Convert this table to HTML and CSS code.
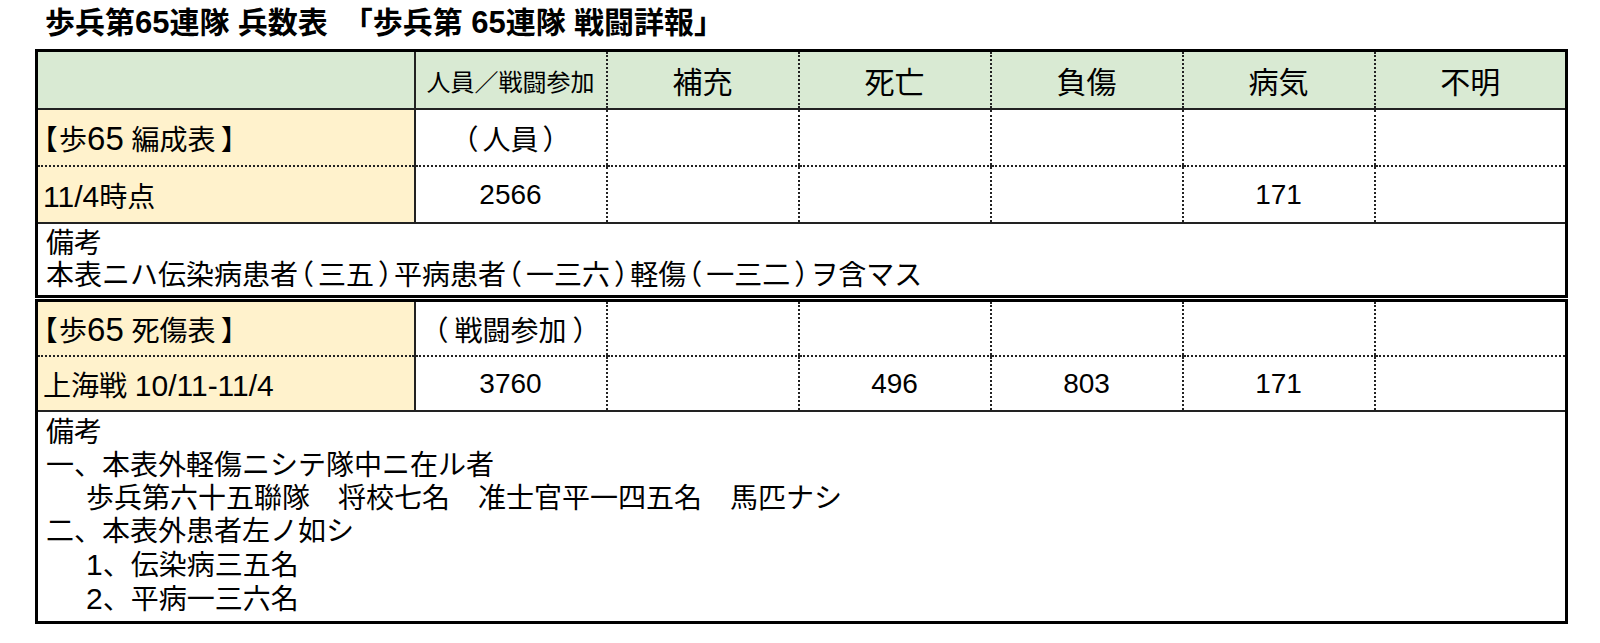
FILE: index.html
```html
<!DOCTYPE html>
<html lang="ja">
<head>
<meta charset="utf-8">
<title>歩兵第65連隊 兵数表</title>
<link rel="stylesheet" href="styles.css">
</head>
<body>
<div class="page">
  <h1 class="title">歩兵第<span class="lat">65</span>連隊 兵数表　<span class="qo">「</span>歩兵第 <span class="lat">65</span>連隊 戦闘詳報」</h1>
  <table class="sheet sheet-a">
    <colgroup>
      <col class="c-label"><col class="c-data"><col class="c-data"><col class="c-data"><col class="c-data"><col class="c-data"><col class="c-data">
    </colgroup>
    <tr class="head">
      <th class="label"></th>
      <th class="small">人員／戦闘参加</th>
      <th>補充</th>
      <th>死亡</th>
      <th>負傷</th>
      <th>病気</th>
      <th>不明</th>
    </tr>
    <tr class="r-top">
      <td class="label"><span class="p o">【</span>歩<span class="lat big">65</span> 編成表<span class="p c">】</span></td>
      <td><span class="p o">（</span>人員<span class="p c">）</span></td><td></td><td></td><td></td><td></td><td></td>
    </tr>
    <tr class="r-bot">
      <td class="label"><span class="lat">11/4</span>時点</td>
      <td class="num">2566</td><td></td><td></td><td></td><td class="num">171</td><td></td>
    </tr>
    <tr class="remarks r-rem-a">
      <td colspan="7">
        <div class="line">備考</div>
        <div class="line">本表ニハ伝染病患者<span class="p o">（</span>三五<span class="p c">）</span>平病患者<span class="p o">（</span>一三六<span class="p c">）</span>軽傷<span class="p o">（</span>一三二<span class="p c">）</span>ヲ含マス</div>
      </td>
    </tr>
  </table>
  <table class="sheet sheet-b">
    <colgroup>
      <col class="c-label"><col class="c-data"><col class="c-data"><col class="c-data"><col class="c-data"><col class="c-data"><col class="c-data">
    </colgroup>
    <tr class="r-top">
      <td class="label"><span class="p o">【</span>歩<span class="lat big">65</span> 死傷表<span class="p c">】</span></td>
      <td><span class="p o wide">（</span>戦闘参加<span class="p c wide">）</span></td><td></td><td></td><td></td><td></td><td></td>
    </tr>
    <tr class="r-bot">
      <td class="label">上海戦 <span class="lat">10/11-11/4</span></td>
      <td class="num">3760</td><td></td><td class="num">496</td><td class="num">803</td><td class="num">171</td><td></td>
    </tr>
    <tr class="remarks r-rem-b">
      <td colspan="7">
        <div class="line">備考</div>
        <div class="line">一、本表外軽傷ニシテ隊中ニ在ル者</div>
        <div class="line indent">歩兵第六十五聯隊　将校七名　准士官平一四五名　馬匹ナシ</div>
        <div class="line">二、本表外患者左ノ如シ</div>
        <div class="line indent"><span class="lat">1</span>、伝染病三五名</div>
        <div class="line indent"><span class="lat">2</span>、平病一三六名</div>
      </td>
    </tr>
  </table>
</div>
</body>
</html>
```
FILE: styles.css
```css
html, body {
  margin: 0;
  padding: 0;
  background: #ffffff;
}
body {
  font-family: "Liberation Sans", "Noto Sans CJK JP", sans-serif;
  color: #000;
}
.page {
  padding: 6px 0 0 35px;
}
.title {
  margin: 0 0 0 10px;
  font-size: 30px;
  font-weight: bold;
  line-height: 33px;
  height: 43px;
  white-space: nowrap;
}
.title .lat { font-size: 31px; }
.title .qo { margin-left: 0; }
.p { font-feature-settings: "palt" 1; }
.lat { font-size: 30px; }
.lat.big { font-size: 33px; }

.sheet {
  width: 1530px;
  border-collapse: collapse;
  table-layout: fixed;
  border: 3px solid #000;
}
.sheet-b {
  margin-top: 1px;
}
.c-label { width: 378px; }
.c-data { width: 192px; }

.sheet th, .sheet td {
  padding: 0;
  font-size: 28px;
  font-weight: normal;
  text-align: center;
  vertical-align: middle;
  white-space: nowrap;
  border-left: 2px dotted #222;
}
.sheet td .p.o { margin-right: 5px; }
.sheet td .p.c { margin-left: 5px; }
.sheet td .p.o.wide { margin-right: 7px; }
.sheet td .p.c.wide { margin-left: 7px; }
.sheet .label .p.o { margin-right: 2px; }
.sheet .label .p.c { margin-left: 6px; }
.remarks .p.o { margin-left: 1px; margin-right: 2px; }
.remarks .p.c { margin-left: 2px; margin-right: 1px; }

.sheet .label {
  background: #fff2cc;
  text-align: left;
  padding-left: 5px;
  border-left: 3px solid #000;
}
.sheet .label + td, .sheet .label + th {
  border-left: 2px solid #222;
}
.head th {
  background: #d9ead3;
  height: 56px;
  font-size: 30px;
  border-bottom: 2px solid #222;
}
.head th.label { background: #d9ead3; }
.head th.small { font-size: 24px; }
.r-top td {
  height: 55px;
  border-bottom: 2px dotted #222;
}
.r-bot td {
  height: 55px;
  border-bottom: 2px solid #222;
}
.sheet-b .r-top td, .sheet-b .r-bot td { height: 53px; }
.num { font-size: 32px; }
.remarks td {
  text-align: left;
  vertical-align: top;
  padding: 4px 0 0 8px;
  border-left: 3px solid #000;
}
.r-rem-a td { height: 67px; }
.r-rem-b td { height: 205px; }
.line {
  line-height: 32px;
  white-space: nowrap;
}
.r-rem-b .line { line-height: 33px; }
.indent { padding-left: 40px; }
```
